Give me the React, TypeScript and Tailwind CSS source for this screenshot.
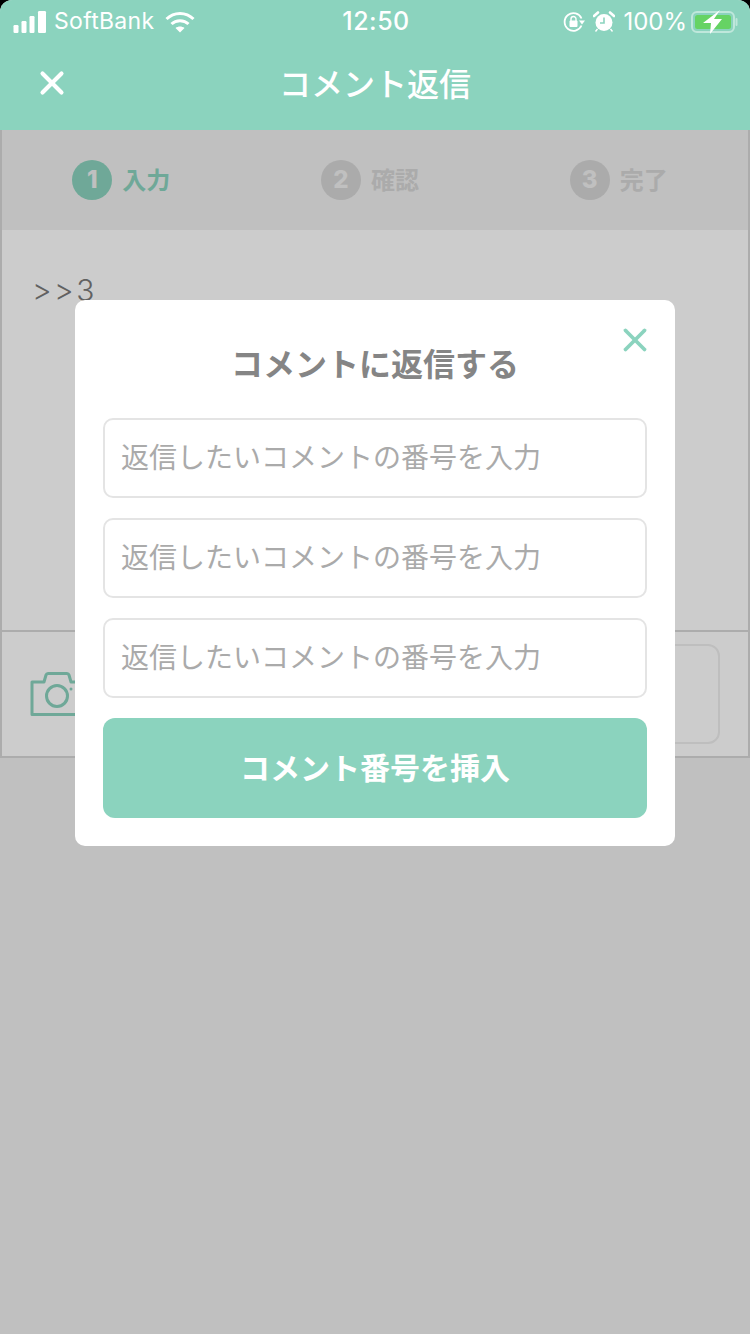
import { X } from 'lucide-react'

const cjk = "font-['Noto_Sans_CJK_JP','Noto_Sans',sans-serif]"

function StatusBar() {
  return (
    <div className="grid h-[42px] grid-cols-3 items-center pl-[13px] pr-[11px] pt-[1px] font-['Inter',sans-serif] text-[24px] font-normal leading-none text-white">
      <div className="flex items-center">
        <svg width="34" height="22" viewBox="0 0 34 22" fill="white" aria-hidden="true">
          <rect x="0.5" y="14" width="5" height="8" rx="1.2" />
          <rect x="8.5" y="10" width="5" height="12" rx="1.2" />
          <rect x="16.5" y="5" width="5" height="17" rx="1.2" />
          <rect x="25" y="0" width="8" height="22" rx="1.2" />
        </svg>
        <span className="ml-[7px] text-[23px] tracking-[0.3px]">SoftBank</span>
        <svg className="ml-[11px]" width="30" height="22" viewBox="0 0 30 22" fill="none" stroke="white" strokeWidth="3" aria-hidden="true">
          <path d="M1.5 8 C9 0.5 21 0.5 28.5 8" />
          <path d="M6.5 13 C11 8.5 19 8.5 23.5 13" />
          <path d="M15 21.5 L10.5 17 C13 15 17 15 19.5 17 Z" fill="white" stroke="none" />
        </svg>
      </div>
      <div className="text-center text-[25px] font-medium tracking-[0.5px]">12:50</div>
      <div className="flex items-center justify-end">
        <svg width="22" height="22" viewBox="0 0 22 22" fill="none" aria-hidden="true">
          <path d="M18.5 14.5 A8.8 8.8 0 1 1 18.5 7.5" stroke="white" strokeWidth="1.8" />
          <path d="M16 9.5 L22 9.5 L19 13.5 Z" fill="white" />
          <rect x="6.5" y="9.5" width="8" height="6.5" rx="1" fill="white" />
          <path d="M8 10 V8 A2.5 2.5 0 0 1 13 8 V10" stroke="white" strokeWidth="1.4" />
        </svg>
        <svg className="ml-[8px]" width="22" height="22" viewBox="0 0 22 22" fill="none" aria-hidden="true">
          <circle cx="11" cy="11.5" r="8.5" fill="white" />
          <path d="M11 6.5 V12 H7" stroke="#8bd3be" strokeWidth="1.6" />
          <path d="M1 5 L5 1.5 M21 5 L17 1.5" stroke="white" strokeWidth="2.6" strokeLinecap="round" />
          <path d="M4.5 18 L2.5 20.5 M17.5 18 L19.5 20.5" stroke="white" strokeWidth="1.4" />
        </svg>
        <span className="ml-[8px] text-[24px]">100%</span>
        <svg className="ml-[4px]" width="48" height="24" viewBox="0 0 48 24" fill="none" aria-hidden="true">
          <rect x="1" y="2" width="42" height="20" rx="5" stroke="white" strokeOpacity="0.45" strokeWidth="2" />
          <rect x="4" y="5" width="36" height="14" rx="2.5" fill="#66d364" />
          <path d="M45.5 9 V15" stroke="white" strokeOpacity="0.45" strokeWidth="2" strokeLinecap="round" />
          <path d="M29 0 L12 13 H20 L19 24 L31 9 H23 Z" fill="white" />
        </svg>
      </div>
    </div>
  )
}

function Step({ n, label, active }: { n: number; label: string; active?: boolean }) {
  return (
    <div className="flex items-center justify-center pr-[10px]">
      <div
        className={`flex h-[40px] w-[40px] items-center justify-center rounded-full font-['Inter',sans-serif] text-[24px] font-extrabold leading-none text-[#f0f0f0] ${active ? 'bg-[#8bd3be]' : 'bg-[#d6d6d6]'}`}
      >
        {n}
      </div>
      <span className={`ml-[10px] pb-[2px] text-[24px] font-bold leading-none ${active ? 'text-[#8bd3be]' : 'text-[#d6d6d6]'}`}>
        {label}
      </span>
    </div>
  )
}

function NumberInput() {
  return (
    <input
      readOnly
      placeholder="返信したいコメントの番号を入力"
      className={`h-[80px] w-full rounded-[10px] border-2 border-[#e4e4e4] bg-white pb-[4px] pl-[16px] pr-[17px] text-[28px] outline-none placeholder:text-[#aaaaaa] ${cjk}`}
    />
  )
}

export default function App() {
  return (
    <div className={`relative h-[1334px] w-[750px] overflow-hidden bg-black ${cjk}`}>
      <div className="flex h-full flex-col overflow-hidden rounded-t-[12px] bg-[#f0f0f0]">
        {/* Header */}
        <div className="relative z-20 h-[130px] shrink-0 bg-[#8bd3be]">
          <StatusBar />
          <div className="relative flex h-[84px] items-center justify-center pb-[4px]">
            <X className="absolute left-[33px] top-[22px] text-white" size={38} strokeWidth={2.6} />
            <h1 className="text-[32px] font-medium leading-none text-white">コメント返信</h1>
          </div>
        </div>

        {/* Steps */}
        <div className="grid h-[100px] shrink-0 grid-cols-3 items-center border-x-2 border-[#d8d8d8] bg-[#f0f0f0]">
          <Step n={1} label="入力" active />
          <Step n={2} label="確認" />
          <Step n={3} label="完了" />
        </div>

        {/* Comment body */}
        <div className="h-[402px] shrink-0 border-x-2 border-b-2 border-[#d8d8d8] bg-white pl-[30px] pt-[40px]">
          <p className="font-['Inter',sans-serif] text-[30px] font-light leading-[40px] tracking-[2.5px] text-[#7a7a7a]">&gt;&gt;3</p>
        </div>

        {/* Attachment row */}
        <div className="flex h-[126px] shrink-0 items-center border-x-2 border-b-2 border-[#d8d8d8] bg-white pl-[28px] pr-[28px]">
          <svg width="60" height="44" viewBox="0 0 60 44" fill="none" stroke="#8bd3be" strokeWidth="3" strokeLinejoin="round" aria-hidden="true">
            <path d="M2 10 H14 L16 3 Q16.5 1.5 18 1.5 H37 Q38.5 1.5 39 3 L41 10 H58 V42.5 H2 Z" />
            <circle cx="27" cy="24" r="10.5" />
            <circle cx="41" cy="17" r="1.5" fill="#8bd3be" stroke="none" />
          </svg>
          <div className="ml-[12px] h-[100px] flex-1 rounded-[12px] border-2 border-[#eeeeee]" />
        </div>

        <div className="flex-1" />
      </div>

      {/* Dim layer under the header */}
      <div className="absolute inset-x-0 bottom-0 top-[130px] z-10 bg-black/20" />

      {/* Modal */}
      <div className="absolute left-[75px] top-[300px] z-30 w-[600px] rounded-[10px] bg-white px-[28px] pb-[28px] pt-[40px]">
        <X className="absolute right-[21px] top-[21px] text-[#8bd3be]" size={38} strokeWidth={2.4} />
        <h2 className="text-center text-[32px] font-bold leading-[44px] text-[#858585]">コメントに返信する</h2>
        <div className="mt-[34px] flex flex-col gap-[20px]">
          <NumberInput />
          <NumberInput />
          <NumberInput />
          <button className="h-[100px] w-full rounded-[12px] bg-[#8bd3be] pb-[4px] text-[30px] font-bold text-white">
            コメント番号を挿入
          </button>
        </div>
      </div>
    </div>
  )
}
